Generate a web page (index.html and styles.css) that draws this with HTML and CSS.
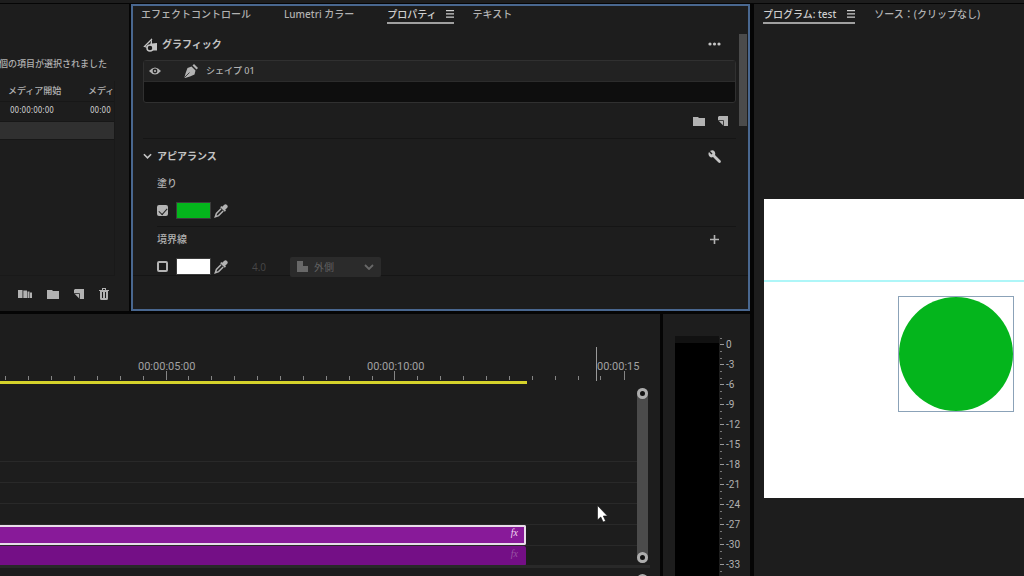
FILE: index.html
```
<!DOCTYPE html>
<html lang="ja">
<head>
<meta charset="utf-8">
<title>test</title>
<link rel="stylesheet" href="styles.css">
</head>
<body>
<svg class="defs" aria-hidden="true">
  <symbol id="folder" viewBox="0 0 13 10"><path d="M0 1h5l1 1h6v8H0z"/></symbol>
  <symbol id="new-item" viewBox="0 0 10 10"><path d="M1 0h9v10H5.800V4.200H0V1z"/><path d="M.8 5H5v4.200z"/></symbol>
  <symbol id="eyedropper" viewBox="0 0 14 14"><path d="M8.200 2.800 10 1a2 2 0 0 1 3 3L11.200 5.800 12 6.600 10.800 7.800 6.200 3.200 7.400 2z"/><path d="M7 4.800 2.400 9.400 1.300 12.700 4.600 11.600 9.200 7" fill="none" stroke="currentColor" stroke-width="1.500"/></symbol>
  <symbol id="chevron" viewBox="0 0 10 6"><path d="M1 1l4 4 4-4" fill="none" stroke="currentColor" stroke-width="1.800"/></symbol>
  <symbol id="menu" viewBox="0 0 8 8"><path d="M0 0h8v1.300H0zM0 3.200h8v1.300H0zM0 6.400h8v1.300H0z"/></symbol>
</svg>
<div class="app">
  <div class="workspace">
    <div class="upper">
      <section class="panel bin">
        <p class="bin-status"><span>個の項目が選択されました</span></p>
        <div class="bin-list">
          <table class="bin-table">
            <thead><tr><th>メディア開始</th><th>メディ</th></tr></thead>
            <tbody>
              <tr><td>00:00:00:00</td><td>00:00</td></tr>
              <tr class="selected"><td></td><td></td></tr>
            </tbody>
          </table>
        </div>
        <div class="bin-tools">
          <button class="icon-button" aria-label="シーケンスへの自動処理"><svg width="14" height="10" viewBox="0 0 14 10"><path d="M0 1h4.500v8H0zM5.300 1.500H9v7.500H5.300zM9.500 2.500h2v6.500h-2zM12 3.500h2V9h-2z"/></svg></button>
          <button class="icon-button" aria-label="新規ビン"><svg width="13" height="10"><use href="#folder"/></svg></button>
          <button class="icon-button" aria-label="新規項目"><svg width="10" height="10"><use href="#new-item"/></svg></button>
          <button class="icon-button" aria-label="消去"><svg width="10" height="12" viewBox="0 0 10 12"><path d="M3 0h4v2h3v1H9v7.500Q9 12 7.500 12h-5Q1 12 1 10.500V3H0V2h3zM4 1v1h2V1zM3 4v6h1V4zM6 4v6h1V4z" fill-rule="evenodd"/></svg></button>
        </div>
      </section>

      <section class="panel properties">
        <nav class="tabs">
          <button class="tab">エフェクトコントロール</button>
          <button class="tab">Lumetri カラー</button>
          <button class="tab active">プロパティ <svg width="8" height="8"><use href="#menu"/></svg></button>
          <button class="tab">テキスト</button>
        </nav>
        <div class="scroll-area">
          <div class="prop-content">
            <header class="prop-header">
              <svg width="15" height="15" viewBox="0 0 15 15"><path d="M9 2 1.500 9.500 5 10.500" fill="none" stroke="currentColor" stroke-width="1.300"/><path d="M9 1v5.500l5-.5v7.500H9L7 8z"/><circle cx="7" cy="11" r="3" fill="#1d1d1d" stroke="currentColor" stroke-width="1.500"/></svg>
              <h2>グラフィック</h2>
              <button class="icon-button trailing" aria-label="その他"><svg width="13" height="4" viewBox="0 0 13 4"><circle cx="2" cy="2" r="1.600"/><circle cx="6.500" cy="2" r="1.600"/><circle cx="11" cy="2" r="1.600"/></svg></button>
            </header>
            <div class="layers">
              <div class="layer">
                <button class="icon-button" aria-label="表示"><svg width="12" height="8" viewBox="0 0 12 8"><path d="M0 4Q6-3 12 4 6 11 0 4z"/><circle cx="6" cy="4" r="2.400" fill="#222"/><circle cx="6" cy="4" r="1.100"/></svg></button>
                <svg class="pen" width="14" height="14" viewBox="0 0 14 14"><path d="M7.500 2.500 11.500 6.500 10.500 10.500 6 12.500 1 14 .5 13 2 8 3.500 4z"/><path d="M8.500 1.500 10 0 14 4 12.500 5.500z"/><path d="M1 13 5.500 8.500" stroke="#222" stroke-width=".8"/></svg>
                <span>シェイプ 01</span>
              </div>
            </div>
            <div class="layer-tools">
              <button class="icon-button" aria-label="新規グループ"><svg width="13" height="10"><use href="#folder"/></svg></button>
              <button class="icon-button" aria-label="新規レイヤー"><svg width="10" height="10"><use href="#new-item"/></svg></button>
            </div>
            <div class="section-head">
              <svg width="9" height="6"><use href="#chevron"/></svg>
              <h2>アピアランス</h2>
              <button class="icon-button trailing" aria-label="設定"><svg width="13" height="13" viewBox="0 0 13 13"><path d="M2 1 4.500 3.500 3.500 4.500 1 2Q-.5 5 2 7 3.500 7.800 5 7L10.500 12.500Q12 13.500 12.800 12 13 11 12.500 10.500L7 5Q8 2 5.500.5 4 0 2 1z"/></svg></button>
            </div>
            <div class="appearance">
              <div class="attr">
                <label class="attr-name" for="fill">塗り</label>
                <div class="attr-row">
                  <input type="checkbox" id="fill" class="check" checked>
                  <button class="swatch fill" aria-label="塗りのカラー"></button>
                  <button class="icon-button" aria-label="スポイト"><svg width="14" height="14"><use href="#eyedropper"/></svg></button>
                </div>
              </div>
              <div class="attr">
                <div class="attr-head">
                  <label class="attr-name" for="stroke">境界線</label>
                  <button class="icon-button trailing" aria-label="追加"><svg width="9" height="9" viewBox="0 0 9 9"><path d="M3.700 0h1.600v3.700H9v1.600H5.300V9H3.700V5.300H0V3.700h3.700z"/></svg></button>
                </div>
                <div class="attr-row">
                  <input type="checkbox" id="stroke" class="check">
                  <button class="swatch stroke" aria-label="境界線のカラー"></button>
                  <button class="icon-button" aria-label="スポイト"><svg width="14" height="14"><use href="#eyedropper"/></svg></button>
                  <input class="stroke-width" aria-label="線幅" value="4.0" disabled>
                  <div class="select-box">
                    <svg width="11" height="11" viewBox="0 0 11 11"><path d="M0 0h6v5h5v6H0z"/></svg>
                    <select aria-label="線の位置" disabled><option>外側</option></select>
                    <svg class="arrow" width="10" height="6"><use href="#chevron"/></svg>
                  </div>
                </div>
              </div>
            </div>
          </div>
          <div class="scroll-thumb"></div>
        </div>
      </section>
    </div>

    <div class="lower">
      <section class="panel timeline">
        <div class="ruler">
          <span class="timecode at-5">00:00:05:00</span>
          <span class="timecode at-10">00:00:10:00</span>
          <span class="timecode at-15">00:00:15</span>
          <svg class="ticks" width="640" height="10" viewBox="0 0 640 10"><path d="M5.500 5v4M28.500 5v4M51.500 5v4M74.500 5v4M97.500 5v4M120.500 5v4M143.500 5v4M166.500 0v9M188.500 5v4M211.500 5v4M234.500 5v4M257.500 5v4M280.500 5v4M303.500 5v4M326.500 5v4M349.500 5v4M372.500 5v4M394.500 0v9M417.500 5v4M440.500 5v4M463.500 5v4M486.500 5v4M509.500 5v4M532.500 5v4M555.500 5v4M578.500 5v4M600.500 5v4M624.500 0v9"/></svg>
          <div class="playhead"></div>
        </div>
        <div class="tracks-area">
          <div class="tracks">
            <div class="work-area"></div>
            <div class="track first"></div>
            <div class="track"></div>
            <div class="track"></div>
            <div class="track"></div>
            <div class="track"><div class="clip selected-clip">fx</div></div>
            <div class="track"><div class="clip">fx</div></div>
          </div>
          <div class="zoom-bar"><i class="knob"></i><i class="knob"></i></div>
        </div>
        <div class="audio-edge"><i class="knob"></i></div>
        <svg class="cursor" width="11" height="18" viewBox="0 0 11 18"><path d="M.5.500v14.500l3.300-3 2.300 5 2.500-1-2.300-5h4.200z" fill="#fff" stroke="#111" stroke-width=".6"/></svg>
      </section>

      <section class="panel meters">
        <div class="meter"></div>
        <ol class="scale">
          <li>0</li><li>-3</li><li>-6</li><li>-9</li><li>-12</li><li>-15</li><li>-18</li><li>-21</li><li>-24</li><li>-27</li><li>-30</li><li>-33</li>
        </ol>
      </section>
    </div>
  </div>

  <section class="panel program">
    <nav class="tabs">
      <button class="tab active">プログラム: test <svg width="8" height="8"><use href="#menu"/></svg></button>
      <button class="tab">ソース：(クリップなし)</button>
    </nav>
    <div class="canvas">
      <div class="guide"></div>
      <div class="shape-box"><div class="circle"></div></div>
    </div>
  </section>
</div>
</body>
</html>
```
FILE: styles.css
```
* { box-sizing: border-box; }

body {
  margin: 0;
  background: #050505;
  color: #b2b2b2;
  font: 10px/16px "Noto Sans", "Noto Sans CJK JP", sans-serif;
}

.defs { position: absolute; width: 0; height: 0; }
svg { display: block; flex: none; fill: currentColor; }
h2, p, ol { margin: 0; padding: 0; font-size: 10px; }

button {
  padding: 0;
  border: 0;
  background: none;
  color: inherit;
  font: inherit;
}

.icon-button { display: flex; flex: none; }
.trailing { margin-left: auto; }

.app {
  display: grid;
  grid-template-columns: minmax(0, 750fr) minmax(0, 270fr);
  gap: 4px;
  height: 100vh;
  overflow: hidden;
  border-top: 3px solid #1d1d1d;
  padding-top: 1px;
}

.workspace {
  display: grid;
  grid-template-rows: auto minmax(0, 1fr);
  gap: 3px;
}

.upper {
  display: grid;
  grid-template-columns: 129px minmax(0, 1fr);
  gap: 2px;
}

.lower {
  display: grid;
  grid-template-columns: minmax(0, 1fr) 87px;
  gap: 3px;
  min-height: 0;
}

.panel { background: #1d1d1d; min-width: 0; }

/* Tabs */
.tabs { display: flex; gap: 33px; white-space: nowrap; }
.tab { display: flex; gap: 9px; align-items: center; height: 18px; border-bottom: 2px solid transparent; font-weight: 500; }
.tab.active { color: #cfcfcf; border-color: #a0a0a0; }
.properties .tab.active { margin-right: -14px; }

/* Bin */
.bin { display: flex; flex-direction: column; padding-top: 52px; font-size: 9px; }
.bin-status { display: flex; justify-content: flex-end; width: 107px; overflow: hidden; font-size: 9px; font-weight: 500; white-space: nowrap; }
.bin-list {
  flex: 1;
  width: 115px;
  margin-top: 9px;
  border: solid #191919;
  border-width: 0 1px 1px 0;
}
.bin-table { width: 114px; border-collapse: collapse; table-layout: fixed; white-space: nowrap; }
.bin-table th, .bin-table td { height: 20px; padding: 0 0 0 8px; text-align: left; font-weight: 500; line-height: 16px; border-bottom: 1px solid #171717; }
.bin-table th:first-child { width: 80px; }
.bin-table td { padding-left: 10px; font: 8px/16px "DejaVu Sans Condensed", "DejaVu Sans", sans-serif; color: #d0d0d0; }
.selected td { height: 18px; background: #303030; }
.bin-tools { display: flex; align-items: center; justify-content: space-between; width: 109px; height: 35px; padding-left: 18px; }

/* Properties */
.properties { border: 2px solid #49678f; padding-bottom: 33px; }
.properties .tabs { padding-left: 8px; }
.scroll-area { display: flex; gap: 3px; margin-top: 10px; border-bottom: 1px solid #151515; }
.prop-content { flex: 1; min-width: 0; padding-left: 10px; }
.scroll-thumb { flex: none; width: 8px; height: 92px; margin-right: 1px; background: #4b4b4b; }
.prop-header { display: flex; align-items: center; gap: 4px; height: 20px; padding-right: 15px; color: #c4c4c4; }
.layers { height: 43px; margin-top: 6px; background: #0e0e0e; border: 1px solid #303030; border-radius: 3px; }
.layer { display: flex; align-items: center; height: 21px; padding-left: 5px; background: #222; border-bottom: 1px solid #2c2c2c; font-size: 9px; font-weight: 500; }
.pen { margin: 0 8px 0 23px; }
.layer-tools { display: flex; align-items: center; justify-content: flex-end; gap: 12px; height: 36px; padding-right: 8px; border-bottom: 1px solid #151515; }
.section-head { display: flex; align-items: center; gap: 5px; height: 34px; padding-right: 15px; color: #c4c4c4; }
.appearance { padding-left: 14px; }
.attr { height: 53px; padding-top: 2px; }
.attr + .attr { height: 49px; border-top: 1px solid #151515; padding-top: 4px; }
.attr-head { display: flex; align-items: center; padding-right: 17px; }
.attr-name { display: block; height: 17px; font-weight: 500; }
.attr-row { display: flex; align-items: center; height: 19px; margin-top: 9px; }
.check {
  flex: none;
  width: 11px;
  height: 11px;
  margin: 0;
  appearance: none;
  border: 2px solid #b4b4b4;
  border-radius: 2px;
}
.check:checked { background: #b4b4b4; }
.check:checked::before {
  content: "";
  display: block;
  width: 7px;
  height: 4px;
  margin-top: 1px;
  border: solid #222;
  border-width: 0 0 1px 1px;
  transform: rotate(-48deg);
}
.swatch { flex: none; width: 35px; height: 17px; margin: 0 3px 0 8px; border: 1px solid #3c3c3c; }
.swatch.fill { background: #04b51c; }
.swatch.stroke { background: #fff; }
.stroke-width { width: 24px; margin-left: 14px; padding: 0; border: 0; background: none; color: #484848; font: 10px/16px "Open Sans", sans-serif; text-align: right; }
.select-box { display: flex; align-items: center; gap: 6px; width: 91px; height: 20px; margin-left: 24px; padding: 0 7px; border-radius: 2px; background: #2b2b2b; color: #686868; }
.select-box select { flex: 1; min-width: 0; padding: 0; appearance: none; border: 0; background: none; color: #606060; font: inherit; opacity: 1; }

/* Timeline */
.timeline { position: relative; display: flex; flex-direction: column; }
.ruler { position: relative; flex: none; height: 67px; }
.timecode { position: absolute; top: 44px; color: #a2a2a2; font: 11px/18px Roboto, sans-serif; }
.at-5 { left: 138px; }
.at-10 { left: 367px; }
.at-15 { left: 597px; }
.ticks { position: absolute; left: 0; bottom: 0; stroke: #858585; }
.playhead { position: absolute; left: 596px; bottom: 0; width: 1px; height: 34px; background: #999; }
.tracks-area { display: flex; flex: none; height: 184px; }
.tracks { flex: 1; min-width: 0; }
.work-area { width: 527px; height: 3px; background: #d5d22b; }
.track { height: 21px; border-bottom: 1px solid #292929; }
.track.first { height: 78px; }
.track:last-child { border: 0; }
.clip {
  width: 526px;
  height: 20px;
  padding-right: 8px;
  border-radius: 0 2px 2px 0;
  background: #740f86;
  color: #9855a4;
  font: italic 10px/16px "Liberation Serif", serif;
  text-align: right;
}
.selected-clip { border: 2px solid #e9dcea; border-left: 0; padding-right: 6px; background: #881a99; color: #f0d9f2; line-height: 12px; }
.zoom-bar { display: flex; flex-direction: column; justify-content: space-between; flex: none; width: 11px; height: 175px; margin: 7px 12px 0 0; background: #4b4b4b; border-radius: 5px; }
.knob { display: block; width: 11px; height: 11px; border: 3px solid #adadad; border-radius: 50%; background: #111; }
.audio-edge { display: flex; justify-content: flex-end; flex: none; margin-right: 10px; padding: 6px 2px 0 0; border-top: 3px solid #292929; height: 12px; overflow: hidden; }
.cursor { position: absolute; left: 597px; top: 191px; }

/* Audio meters */
.meters { display: flex; padding: 21px 0 0 12px; }
.meter { width: 44px; margin-top: 1px; background: linear-gradient(#111 7px, #000 7px); }
.scale {
  display: flex;
  flex-direction: column;
  flex: 1;
  height: 239px;
  list-style: none;
  font: 10px/20px Roboto, sans-serif;
}
.scale li {
  flex: 1;
  padding-left: 7px;
  background:
    linear-gradient(#999, #999) 1px 9px / 4px 1px no-repeat,
    linear-gradient(#777, #777) 1px 3px / 2px 1px no-repeat,
    linear-gradient(#777, #777) 1px 16px / 2px 1px no-repeat;
}

/* Program monitor */
.program { padding-top: 2px; }
.program .tabs { gap: 19px; padding-left: 9px; }
.program .tab { gap: 11px; }
.canvas { position: relative; height: 299px; margin: 175px 0 0 10px; background: #fff; overflow: hidden; }
.guide { position: absolute; left: 0; right: 0; top: 81px; height: 2px; background: #aef6f8; }
.shape-box { position: absolute; left: 134px; top: 97px; width: 116px; height: 116px; border: 1px solid #8ba2b8; }
.circle { width: 114px; height: 114px; border-radius: 50%; background: #04b51c; }
```
